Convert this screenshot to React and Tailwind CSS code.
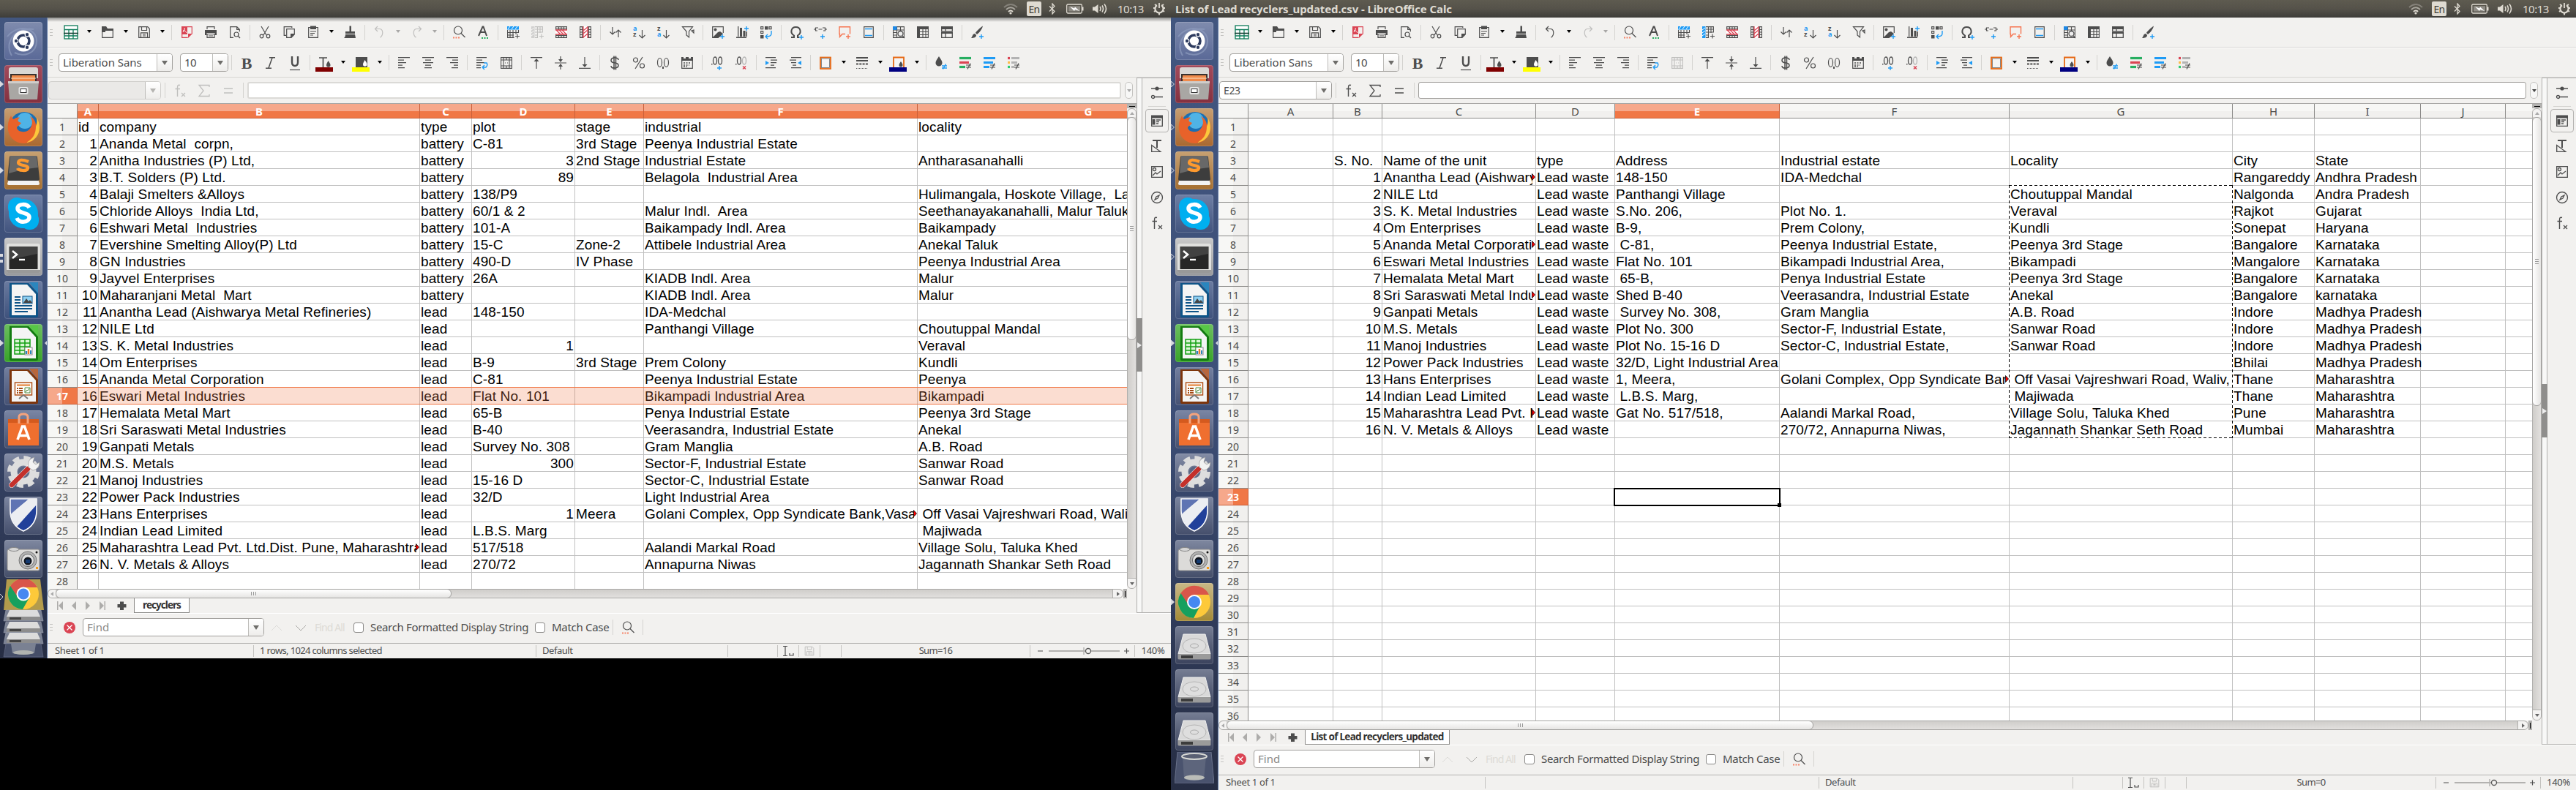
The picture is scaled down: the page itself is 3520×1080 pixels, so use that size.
import React from "react";

const UI = "font-['Noto_Sans',sans-serif]";
const INK = "#4d4d4d";

/* ---------- toolbar glyphs, all on a 20x20 canvas ---------- */
const S = (p) => <g fill="none" stroke={p.c || INK} strokeWidth={p.w || 1.2}>{p.children}</g>;
const F = (p) => <g fill={p.c || INK}>{p.children}</g>;
const Plus = ({ x = 16, y = 16 }) => <path d={`M${x - 3} ${y}h6M${x} ${y - 3}v6`} stroke="#1e9bf5" strokeWidth="1.4" />;

const ICONS = {
  calc: <><rect x="1" y="1" width="18" height="18" fill="#fff" stroke="#0b7a57" strokeWidth="1.3" /><path d="M1 6.5h18M1 15h18M7 6.5V19M13 6.5V19" stroke="#0b7a57" strokeWidth="1.3" /><path d="M0 11.5h20" stroke="#163f33" strokeWidth="1.6" /></>,
  open: <><S><path d="M2.700 7.500h14.600v9.800H2.700z" /></S><F><path d="M2 2h6l2 3h8v3H7v2H2z" /></F></>,
  save: <S><path d="M2.700 2.700h12l2.600 2.600v12H2.700zM6.500 2.700v4.800h7V2.700M5.500 17.300v-6.500h9v6.500M8 13h4M8 15h4" strokeWidth="1.2" /></S>,
  pdf: <><F c="#da4453"><path d="M3 2h8v11H3z" /></F><path d="M5 10c1-2 3-4 2-6M5 8c2-1 4 1 5 3" fill="none" stroke="#fff" /><S c="#da4453"><path d="M11 2.700h6.300v9.600M3.700 13v4.300h8" /></S><F c="#da4453"><path d="M12 12h6l-6 6z" /></F></>,
  print: <><F><path d="M2 7h16v7h-2.500V11H4.500v3H2z" /></F><S><path d="M5 6V2.700h10V6M5 12.500h10v4.800H5zM7 15h6" /></S></>,
  preview: <S><path d="M8 17.300H3.700V2.700h9l3.600 3.600v3M12.700 2.700v3.600h3.600" /><circle cx="12" cy="13" r="3" /><path d="M14 15l3 3" /></S>,
  cut: <S><path d="M5 2l7 12M15 2L8 14" /><circle cx="5.500" cy="15.500" r="2.300" /><circle cx="14.500" cy="15.500" r="2.300" /></S>,
  copy: <><S><path d="M6 14.300H3.200V2.700h10.600V4M6.700 5.700h10.600V13L13 17.300H6.700z" /></S><F><path d="M12 12h6l-6 6z" /></F></>,
  paste: <><F><path d="M6 1.500h8V6H6z" /></F><S><path d="M6 3.500H3.700v13.800h12.600V3.500H14M6 9h8M6 11.500h6M6 14h4" /></S></>,
  brush: <F><path d="M9.500 1.500h2.500V9h5v3H4V9h5.500zM4 13h13l1 5H2c1.500-1 2-3 2-5z" /></F>,
  undo: <S><path d="M7 2L3.500 5.500 7 9M3.500 5.500h6c5 0 6 8 1 11.800" /></S>,
  redo: <S><path d="M13 2l3.500 3.500L13 9M16.500 5.500h-6c-5 0-6 8-1 11.800" /></S>,
  find: <><S><circle cx="9" cy="7.500" r="5.500" /><path d="M13 11.500l5.500 5.500" /></S><path d="M2 17.500h10" stroke="#f6866a" strokeWidth="2" strokeDasharray="2 1.500" /></>,
  spell: <><S w="2"><path d="M4 15L9.500 2.500h1L15 15M6 10h7.500" /></S><path d="M8 18h9" stroke="#27ae60" strokeWidth="2" strokeDasharray="2 1.500" /></>,
  rowins: <><rect x="2" y="2" width="16" height="4.500" fill="#1e9bf5" /><path d="M3 6l3-4M8 6l3-4M13 6l3-4" stroke="#fff" /><S w="1.100"><path d="M2.600 7v10.400h9M2 10.500h16M2 14h9M6 7v10M10 7v10M14 7v6M17.500 7v4" /><path d="M13 15.500h6M16 12.500v6" /></S></>,
  colins: <><rect x="2" y="2" width="4.500" height="16" fill="#1e9bf5" /><path d="M2 7l4-3M2 11l4-3M2 15l4-3" stroke="#fff" /><S w="1.100"><path d="M7 2.600h10.400v8M7 6h10M7 10h10M7 14h4M7 17.400h4M10.500 2v16M14 2v9" /><path d="M13 15.500h6M16 12.500v6" /></S></>,
  rowdel: <><S w="1.100"><path d="M2.600 2.600h14.800v14.800H2.600zM2 5.500h16M2 14.500h16M6.500 2v16M10 2v16M13.500 2v16" /></S><rect x="2" y="7" width="16" height="6" fill="#fff" /><path d="M2 7h16M2 13h16M3 7l6 6M7 7l6 6M11 7l6 6" stroke="#da4453" strokeWidth="1.300" /></>,
  coldel: <><S w="1.100"><path d="M2.600 2.600h14.800v14.800H2.600zM5.500 2v16M14.500 2v16M2 6.500h16M2 10h16M2 13.500h16" /></S><rect x="7" y="2" width="6" height="16" fill="#fff" /><path d="M7 2v16M13 2v16M7 8l6-5M7 12l6-5M7 17l6-5" stroke="#da4453" strokeWidth="1.300" /></>,
  sort: <S><path d="M6 3v10M2.500 9.500L6 13l3.500-3.500M14 17V7M10.500 10.500L14 7l3.500 3.500" /></S>,
  az: <><text x="1" y="8" fontSize="9" fontWeight="700" fill="#1e9bf5">a</text><text x="1" y="16" fontSize="9" fontWeight="700" fill={INK}>z</text><S><path d="M13.500 7v11M9.500 14l4 4 4-4" /></S></>,
  za: <><text x="1" y="8" fontSize="9" fontWeight="700" fill={INK}>z</text><text x="1" y="16" fontSize="9" fontWeight="700" fill="#1e9bf5">a</text><S><path d="M13.500 7v11M9.500 14l4 4 4-4" /></S></>,
  filter: <><S><path d="M2.500 2.700h14L11.500 9v8L8 14V9z" /><path d="M15 8l3 3v-4z" /></S></>,
  image: <><S><path d="M11 17.300H2.700V2.700h14.600V11" /></S><F><circle cx="6.500" cy="6.500" r="2" /><path d="M3 17l7-7 3-1 4 3-5 5z" /></F><Plus /></>,
  chart: <><F><path d="M4 2h1.300v14H4zM7 4h3v12H7zM11.500 8h3v8h-3zM15.500 9H17v7h-1.500zM2 16.500h14V18H2z" /></F><Plus x={16} y={5} /></>,
  pivot: <><S><path d="M2.700 2.700h3v3h-3zM2.700 8.700h3v3h-3z" /><path d="M14 2.700h3v3h-3z" /></S><F><path d="M8 2h4.500v4.500H8zM2 14h4.500v4.500H2z" /></F><path d="M17 8v4q0 4-7 4M12 13l-3 3 3 3" fill="none" stroke="#1e9bf5" strokeWidth="1.400" /></>,
  omega: <><S w="2"><path d="M3 17h4v-2.500C1 11 3 3 9.500 3S18 11 12 14.500V17h2" /></S><Plus x={17} y={17} /></>,
  link: <><S><path d="M6 8H3.500V4H7M13 4h3.500v4H14M1 6h3M7.500 6h5M16 6h3" /></S><Plus x={13} /></>,
  comment: <><path d="M11 12.500H7l-3.500 4v-4H3V2.700h14.500v9.800" fill="none" stroke="#f67450" strokeWidth="1.400" /><path d="M12 16h6M15 13v6" stroke="#f67450" strokeWidth="1.400" /></>,
  headfoot: <><S><path d="M3.700 2.700h12.600v14.600H3.700z" /></S><path d="M5 5.500h10M5 14.500h10" stroke="#1e9bf5" strokeWidth="1.400" /></>,
  freeze: <><S w="1.100"><path d="M2.600 2.600h14.800v14.800H2.600zM7.500 2v16M12.500 2v9M2 7h16M2 10.500h6M2 14h6" /></S><rect x="2" y="2" width="5.500" height="5" fill="#1e88e5" /><circle cx="12.500" cy="12" r="3.500" fill="#eee" stroke={INK} strokeWidth="1.300" /><path d="M15 15l3 3" stroke={INK} strokeWidth="1.400" /></>,
  split: <><F><path d="M2 2h16v4H2zM2 6h4v12H2z" /></F><S w="1.100"><path d="M6 17.400h11.400V6M10 6v12M14 6v12M6 9.500h12M6 13.500h12" /></S></>,
  splitwin: <><F><path d="M2 2h16v4H2zM2 10h16v2H2z" /></F><S w="1.300"><path d="M2.700 6v3h14.600V6M8 6v3M2.700 12v5.300h14.600V12M8 12v5" /></S></>,
  paint: <><F><path d="M18 1.500C14 4 9 9 8 11l2 2c3-2 7-7 8-11.500zM7 12c-3 0-3 4-5 6 4 0 7-1 7-4z" /></F><Plus /></>,
  bold: <text x="10" y="18" fontSize="22" fontWeight="700" textAnchor="middle" fill={INK} className="font-['Liberation_Serif',serif]">B</text>,
  italic: <S w="1.500"><path d="M8 2.700h8M3 17.300h8M12 3L7 17" /></S>,
  under: <><S w="2.400"><path d="M6 1v8q0 5 4 5t4-5V1" /></S><path d="M3 19.500h14" stroke={INK} strokeWidth="1.200" /></>,
  fontcol: <><S w="1.700"><path d="M2 3h11M7.500 3v13" /></S><F><path d="M14.500 7c2 3 3 4 3 6a2.600 2.600 0 0 1-5.500 0c0-2 1-3 2.500-6z" /></F></>,
  bgcol: <><F><path d="M2 2h16v15H2z" /></F><path d="M14.500 6c2 3 3 4 3 6a2.600 2.600 0 0 1-5.500 0c0-2 1-3 2.500-6z" fill="#fff" /></>,
  left: <S><path d="M2 2.700h16M2 6.200h8M2 9.700h11M2 13.200h6M2 16.700h9" /></S>,
  center: <S><path d="M2 2.700h16M6 6.200h8M3 9.700h14M6 13.200h8M5 16.700h10" /></S>,
  right: <S><path d="M2 2.700h16M10 6.200h8M7 9.700h11M12 13.200h6M9 16.700h9" /></S>,
  wrap: <><S><path d="M2 2.700h14M2 6.200h8M2 9.700h11M2 13.200h6M2 16.700h6" /></S><path d="M12 10h4q2 3-1 6h-4M13 13l-3 3 3 3" fill="none" stroke="#1e9bf5" strokeWidth="1.400" /></>,
  merge: <S w="1.100"><path d="M2.600 2.600h14.800v14.800H2.600zM2 6h16M2 14h16M6 2v4M10 2v4M14 2v4M6 14v4M10 14v4M14 14v4M6 6v8M14 6v8M8 10h1M11 10h1" /></S>,
  top: <><S><path d="M2 2.700h16M10 5v13" /></S><F><path d="M10 4l3.500 4h-7z" /></F></>,
  middle: <><S><path d="M2 10h16M10 1v7M10 12v7" /></S><F><path d="M10 9L7 5h6zM10 11l3 4H7z" /></F></>,
  bottom: <><S><path d="M2 17.300h16M10 2v13" /></S><F><path d="M10 16L6.500 12h7z" /></F></>,
  dollar: <S w="1.800"><path d="M15 6q0-3-5-3T5 6.500q0 3 5 3.500t5 3.500T10 17t-5-3M9 .500v19M11.500 .500v19" strokeWidth="1.500" /></S>,
  percent: <S><circle cx="5.500" cy="6" r="3" /><circle cx="14.500" cy="14" r="3" /><path d="M15 2L5 18" /></S>,
  number: <><S><ellipse cx="5.500" cy="9.500" rx="3" ry="6" /><ellipse cx="14.500" cy="9.500" rx="3" ry="6" /></S><F><path d="M9 15h2v3H9z" /></F></>,
  date: <><F><path d="M2 2h3v2h3V2h4v2h3V2h3v5H2z" /></F><S><path d="M2.700 6v11.300h14.600V6" /><path d="M5 10h10M5 13h8M5 15h5" strokeWidth="1.500" strokeDasharray="2 1.500" /></S></>,
  decadd: <><S w="1.300"><ellipse cx="7" cy="7" rx="2.500" ry="5" /><ellipse cx="14" cy="7" rx="2.500" ry="5" /></S><F><path d="M2 11h1.500v1.500H2z" /></F><Plus x={13} y={17} /></>,
  decdel: <><S w="1.300"><ellipse cx="7" cy="7" rx="2.500" ry="5" /></S><S c="#b5b5b5" w="1.300"><ellipse cx="14" cy="7" rx="2.500" ry="5" /></S><F><path d="M2 11h1.500v1.500H2z" /></F><path d="M12 14.500l4 4M16 14.500l-4 4" stroke="#da4453" strokeWidth="1.500" /></>,
  indent: <><S><path d="M2 2.700h14M9 6.200h9M9 9.700h8M9 13.200h5M2 16.700h14" /></S><path d="M2 7v6l5-3z" fill="#1e9bf5" /></>,
  outdent: <><S><path d="M4 2.700h14M2 6.200h9M4 9.700h7M6 13.200h5M4 16.700h14" /></S><path d="M18 7v6l-5-3z" fill="#1e9bf5" /></>,
  border: <><rect x="3" y="2.500" width="14" height="15.500" fill="#f5f5f5" stroke="#e66914" strokeWidth="1.800" /><rect x="4.500" y="4" width="11" height="12.500" fill="none" stroke="#6a6a6a" strokeWidth=".8" /></>,
  linestyle: <S w="1.800"><path d="M2 3h16M2 7h16" /><path d="M2 11.500h16" strokeDasharray="3 1.300" /><path d="M2 17.500h16" strokeDasharray="1 1" strokeWidth="1.200" /></S>,
  bordercol: <><path d="M3 18V2.500h14V18" fill="#f5f5f5" stroke="#e66914" strokeWidth="1.800" /><path d="M13 8c2 3 2.500 3.500 2.500 5a2.300 2.300 0 0 1-5 0c0-1.500 1-3 2.500-5z" fill={INK} /></>,
  cond: <><F><path d="M7 1c3 5 4.500 6 4.500 9a4.300 4.300 0 0 1-9 0c0-3 2-5 4.500-9z" /></F><path d="M11 14h7M11 17h7M16.500 11.500l-4 7" stroke="#1e9bf5" strokeWidth="1.400" /></>,
  cond2: <><path d="M2 3.500h16" stroke="#27ae60" strokeWidth="3.200" /><path d="M2 9.500h13" stroke="#da4453" strokeWidth="3.200" /><path d="M2 15.500h8" stroke="#27ae60" strokeWidth="3.200" /><S w="1.200"><path d="M11 13h7M11 16h7M17 10.500l-4 8" /></S></>,
  cond3: <><path d="M2 3.500h16M2 9.500h13M2 15.500h8" stroke="#1e9bf5" strokeWidth="3.200" /><S w="1.200"><path d="M11 13h7M11 16h7M17 10.500l-4 8" /></S></>,
  cond4: <><path d="M2 3.500h3" stroke="#da4453" strokeWidth="3.200" /><path d="M2 9.500h3" stroke="#fdbc4b" strokeWidth="3.200" /><path d="M2 15.500h3" stroke="#2ecc71" strokeWidth="3.200" /><path d="M7 3.500h11M7 9.500h8M7 15.500h4" stroke="#b3b3b3" strokeWidth="3.200" /><S w="1.200"><path d="M11 13h7M11 16h7M17 10.500l-4 8" /></S></>,
  fx: <><S w="1.400"><path d="M10 2.500C7 1.500 6.500 3 6.500 6v12M3.500 7.500H10" /><path d="M12 13l5 5M17 13l-5 5" strokeWidth="1.200" /></S></>,
  sigma: <S w="1.300"><path d="M17 5V2.500H3L9 10l-6 7.500h14V15" /></S>,
  equal: <S w="1.300"><path d="M4 7h12M4 13h12" /></S>,
  props: <S w="1.300"><path d="M2.700 3v14.300h14.600V3" /><path d="M2 4.500h16" strokeWidth="4" /><path d="M5.500 8v7.500" strokeWidth="4" /><path d="M9 9h6M9 11.500h4M9 14h3" /></S>,
  sliders: <><S w="1.300"><path d="M2 4h16M7 15.500h11" /><circle cx="4.500" cy="15.500" r="2" /></S><F><circle cx="10" cy="4" r="2.600" /></F></>,
  styles: <><S w="2"><path d="M4 2h12M10 2v10" /></S><S w="1.300"><path d="M2.700 8.500v8.800h12z" /></S></>,
  gallery: <S w="1.300"><path d="M2.700 2.700h14.600v14.600H2.700z" /><circle cx="6.500" cy="6.500" r="2" /><path d="M4 15l4-4 2 2 5-4" /></S>,
  compass: <><S w="1.300"><circle cx="10" cy="10" r="7.500" /><path d="M13 7l-2 4-4 2 2-4z" /></S></>,
};

const Icon = ({ name, off, size }) => (
  <svg viewBox="0 0 20 20" className={`${size || "size-5"} shrink-0 overflow-visible ${off ? "opacity-30 grayscale" : ""}`}>{ICONS[name]}</svg>
);

const Sep = ({ h = "h-[21px]" }) => (
  <div className="flex w-2 shrink-0 justify-center"><div className={`${h} w-px bg-[#d4d3d0]`} /></div>
);
const Caret = ({ off }) => (
  <div className="flex w-[17px] shrink-0 justify-center pb-0.5">
    <svg viewBox="0 0 6 4" className={`h-1 w-1.5 ${off ? "opacity-30" : ""}`}><path d="M0 0h6L3 4z" /></svg>
  </div>
);
const Grip = () => (
  <div className="flex w-3.5 shrink-0 flex-col items-center gap-[3px] pr-1">
    {[0, 1, 2].map((i) => <div key={i} className="h-px w-1 bg-[#c4c3c0]" />)}
  </div>
);

const SWATCH = { fontcol: "bg-[#800000]", bgcol: "bg-[#ffff00]", bordercol: "bg-[#000080]" };

function Items({ list }) {
  return list.split(" ").map((raw, i) => {
    if (raw === "|") return <Sep key={i} />;
    if (raw === "v" || raw === "v-") return <Caret key={i} off={raw === "v-"} />;
    const off = raw.endsWith("-");
    const name = off ? raw.slice(0, -1) : raw;
    return (
      <div key={i} className="relative flex w-[33px] shrink-0 justify-center">
        <Icon name={name} off={off} />
        {SWATCH[name] && <div className={`absolute left-1 top-4 h-1.5 w-6 ${SWATCH[name]}`} />}
      </div>
    );
  });
}

const Drop = ({ w, off }) => (
  <div className={`flex ${w} shrink-0 items-center justify-center self-stretch rounded-r-[3px] border-l border-[#bdbcb9] bg-linear-to-b from-white to-[#eeedeb]`}>
    <svg viewBox="0 0 8 6" className="h-1.5 w-2"><path d="M0 0h8L4 6z" fill={off ? "#b5b4b1" : "#6e6d6a"} /></svg>
  </div>
);

/* ---------- top panel ---------- */
function Panel({ title }) {
  return (
    <div className={`flex h-6 items-center bg-linear-to-b from-[#5e5b50] via-[#55524a] to-[#3e3d39] text-[#dfdbd2] ${UI}`}>
      <div className="flex-1 whitespace-pre pl-[6px] text-[15px] leading-6 font-bold tracking-[-0.1px]">{title}</div>
      <svg viewBox="0 0 20 16" className="mr-3 h-4 w-5" fill="none" strokeWidth="2">
        <path d="M1 6q9-8 18 0" stroke="#85827a" /><path d="M4 9q6-5.500 12 0" stroke="#a9a69e" /><path d="M7 12q3-3 6 0" stroke="#dfdbd2" /><circle cx="10" cy="14" r="1.600" fill="#dfdbd2" />
      </svg>
      <div className="mr-2.5 flex h-5 w-5 items-center justify-center rounded-[2px] bg-[#dfdbd2] text-[14px] tracking-[-0.8px] text-[#3e3d39]">En</div>
      <svg viewBox="0 0 10 16" className="mr-3.5 h-4 w-2.5" fill="none" stroke="#dfdbd2" strokeWidth="1.300"><path d="M1 4.500l7 7L5 15V1l3 3.500-7 7" /></svg>
      <svg viewBox="0 0 24 14" className="mr-3 h-3.5 w-6" fill="none" stroke="#dfdbd2" strokeWidth="1.300"><rect x=".7" y="1" width="20.600" height="12" rx="1.500" /><path d="M22.500 4.500v5" strokeWidth="2" /><rect x="3" y="3.300" width="16" height="7.400" fill="#8f8c85" stroke="none" /><path d="M5 4l6 2.500 1-2 6 5.500-6-2-1 2z" fill="#fff" stroke="none" /></svg>
      <svg viewBox="0 0 20 16" className="mr-3.5 h-4 w-5" fill="none" stroke="#dfdbd2" strokeWidth="1.600"><path d="M0 5.500h3L7.500 2v12L3 10.500H0z" fill="#dfdbd2" stroke="none" /><path d="M10 5q2 3 0 6M13 3.500q3 4.500 0 9M16 1.500q5 6.500 0 13" /></svg>
      <div className="mr-3 w-9 text-[15px] leading-6 tracking-[-0.5px]">10:13</div>
      <svg viewBox="0 0 18 18" className="mr-[7px] h-[18px] w-[18px]" fill="none" stroke="#dfdbd2"><path d="M6 4.200a5.600 5.600 0 1 0 6 0" strokeWidth="2.200" /><path d="M9 1v7" strokeWidth="1.800" /><path d="M9 15v2.500M2 13l2-1.500M16 13l-2-1.500M1 8h2.500M17 8h-2.500M3 3l2 1.500M15 3l-2 1.500" strokeWidth="2" /></svg>
    </div>
  );
}

/* ---------- launcher ---------- */
const ART = {
  dash: <><path d="M4 20C18 2 44 8 44 26S26 48 14 42M10 46C-2 26 18 6 40 10" fill="none" stroke="#8d9bbd" strokeWidth="2" opacity=".7" /><circle cx="26" cy="26" r="14.500" fill="#fff" /><circle cx="26" cy="26" r="8" fill="none" stroke="#2c3a5e" strokeWidth="3.600" /><g fill="#2c3a5e" stroke="#fff" strokeWidth="1.200"><circle cx="16" cy="26" r="2.800" /><circle cx="31" cy="17.300" r="2.800" /><circle cx="31" cy="34.700" r="2.800" /></g></>,
  files: <><path d="M6 6q0-3 3-3h34q3 0 3 3v12H6z" fill="#d9d7d4" /><path d="M8 12h36v12H8z" fill="#39312e" /><path d="M10 14h32v10H10z" fill="#f08a4b" /><path d="M9 18h34" stroke="#fbe3c8" /><path d="M5 22h42l-2 25H7z" fill="#a9a7a4" /><path d="M5 22h42v3H5z" fill="#cfcdca" /><rect x="19.500" y="30" width="13" height="10" rx="2" fill="#e6e6e6" /><rect x="22" y="32.500" width="8" height="5" fill="#fff" stroke="#333" /></>,
  firefox: <><circle cx="27" cy="25" r="20" fill="#1b6fb3" /><circle cx="28" cy="17" r="11" fill="#4fb3e6" /><path d="M44 12c9 16 2 35-17 36C12 48 3 36 5 22c1-7 3-9 4-12 1 3 2 4 4 5 2-2 6-3 8-2-4 3-3 6 2 7-2 4-6 4-6 7 2 6 12 7 17 2 5-6 5-12 1-18 5 2 8 8 8 12 2-4 2-7 1-11z" fill="#e8622a" /><path d="M44 12c9 16 2 33-14 35 9-5 13-12 13-22 2-4 2-9 1-13z" fill="#fbc73c" /></>,
  sublime: <><path d="M6 38h40l2 6q0 2-2 2H6q-2 0-2-2z" fill="#f2f2f2" /><path d="M9 6h34q2 0 2 2l3 30q0 2-2 2H6q-2 0-2-2L7 8q0-2 2-2z" fill="#3d3d3d" /><path d="M8 6h36l2 16q-20 2-40 8z" fill="#7b7b7b" opacity=".7" /><path d="M33 14q-13-5-14 1c0 5 14 3 13 8-1 5-13 3-14 0" fill="none" stroke="#ff9a2e" strokeWidth="4.200" /></>,
  skype: <><rect x="5" y="4" width="24" height="26" rx="12" fill="#00aff0" /><rect x="22" y="22" width="25" height="26" rx="12" fill="#00aff0" /><circle cx="26" cy="26" r="20" fill="#00aff0" /><path d="M34 18c-3-6-16-6-16 1s16 5 16 12-14 9-17 1" fill="none" stroke="#fff" strokeWidth="5.500" /></>,
  term: <><rect x="3" y="8" width="46" height="40" rx="3" fill="#e0e0de" /><path d="M3 44h46v2q0 2-2 2H5q-2 0-2-2z" fill="#999" /><rect x="6.500" y="12" width="39" height="31" fill="#262626" /><path d="M7 12h38v10L7 30z" fill="#555" opacity=".6" /><path d="M11 18l6 5-6 5" fill="none" stroke="#fff" strokeWidth="2.600" /><path d="M20 30h8" stroke="#fff" strokeWidth="2.400" /></>,
  writer: <><path d="M7 3h26l13 14v31q0 2-2 2H9q-2 0-2-2z" fill="#0e5488" /><path d="M34 2h12v15z" fill="#2a86be" /><path d="M10 5h21l12 13v29H10z" fill="#f4f4f4" /><path d="M14 22h8M14 26h8M14 30h8M14 34h24M14 38h24M14 42h18" stroke="#0e5488" strokeWidth="2" /><rect x="25" y="21" width="13" height="10" fill="#8fd0f2" stroke="#0e5488" /><path d="M26 30l4-6 3 4 2-2 3 4z" fill="#444" /></>,
  calc: <><path d="M7 3h26l13 14v31q0 2-2 2H9q-2 0-2-2z" fill="#127b10" /><path d="M34 2h12v15z" fill="#56c845" /><path d="M10 5h21l12 13v29H10z" fill="#f4f4f4" /><path d="M14 21h21v20H14zM14 26h21M14 31h21M14 36h21M21 21v20M28 21v20" fill="#d9f5d4" stroke="#12a012" strokeWidth="1.500" /><rect x="28" y="32" width="10" height="10" fill="#fff" stroke="#888" /><path d="M30 41v-4" stroke="#2a86be" strokeWidth="2.500" /><path d="M33 41v-7" stroke="#f0792a" strokeWidth="2.500" /><path d="M36 41v-5" stroke="#2a86be" strokeWidth="2" /></>,
  impress: <><path d="M7 3h26l13 14v31q0 2-2 2H9q-2 0-2-2z" fill="#7d350c" /><path d="M34 2h12v15z" fill="#b8663c" /><path d="M10 5h21l12 13v29H10z" fill="#f4f4f4" /><rect x="14.500" y="21" width="23" height="17" fill="#fff" stroke="#b3541c" strokeWidth="1.500" /><path d="M17 24.500h18" stroke="#e07a2c" strokeWidth="2" /><path d="M17 29h8M17 32h8M17 35h8" stroke="#a34a14" strokeWidth="2" strokeDasharray="2 1 9" /><path d="M28 35V28h7v7zM29 34l2-3 1 1 2-3" fill="none" stroke="#4f8b3c" /><path d="M26 38l-6 5M26 38l6 5" stroke="#777" strokeWidth="1.800" /></>,
  bag: <><path d="M5 12h42v36H5z" fill="#ef6f2f" /><path d="M5 12h42v5H5z" fill="#d45a1e" /><path d="M20 18V9q0-4 6-4t6 4v9" fill="none" stroke="#f4a37c" strokeWidth="3" /><path d="M18 40l6.500-18h3L34 40M18.500 34.500h15" fill="none" stroke="#fff" strokeWidth="3.600" /></>,
  gear: <><circle cx="26" cy="25" r="18.500" fill="none" stroke="#dcdcdc" strokeWidth="7" strokeDasharray="8.500 6" /><circle cx="26" cy="25" r="13" fill="none" stroke="#dedede" strokeWidth="9" /><circle cx="26" cy="25" r="7" fill="#5b6480" /><path d="M35 18L10 43" stroke="#fff" strokeWidth="8" strokeLinecap="round" opacity=".7" /><path d="M32 21L10 43" stroke="#c4302b" strokeWidth="6.500" strokeLinecap="round" /><path d="M33 19q-3-11 8-14l-2 7 4 3 5-3q0 9-9 11z" fill="#f2f2f2" stroke="#999" strokeWidth=".7" /></>,
  shield: <><path d="M8 3h36v16q0 20-18 28Q8 39 8 19z" fill="#21409a" stroke="#fff" strokeWidth="1.600" /><path d="M33 3h11v8L17 41Q9 32 8 24z" fill="#eceef2" /><path d="M9 4h22L9 24z" fill="#8191c0" opacity=".65" /></>,
  camera: <><rect x="4" y="13" width="44" height="29" rx="2" fill="#dcdbd9" stroke="#8c8c8c" /><ellipse cx="13" cy="13" rx="7" ry="2.500" fill="#d5d5d5" stroke="#888" /><circle cx="32" cy="28" r="12" fill="#b3b3b3" stroke="#777" /><circle cx="32" cy="28" r="8.500" fill="#e2e2e2" stroke="#666" /><circle cx="32" cy="29" r="5.500" fill="#11161f" /><rect x="29" y="27" width="6" height="5" fill="#143a70" /><circle cx="44" cy="17" r="1.500" fill="#111" /><rect x="43" y="37" width="3" height="3" fill="#f39a1c" /></>,
  chrome: <><circle cx="26" cy="26" r="22" fill="#fdc93a" /><path d="M6 17A22 22 0 0 1 46 16H26l-8 14z" fill="#d9564a" /><path d="M7.500 14A22 22 0 0 0 25 48l9-17-16-1z" fill="#17a05e" /><circle cx="26" cy="26" r="10" fill="#fff" /><circle cx="26" cy="26" r="8" fill="#4688f1" /></>,
  drive: <><path d="M11 11h30l7 27H4z" fill="#d9d9d9" stroke="#f0f0f0" /><path d="M3.500 38h45v6q0 1.500-2 1.500h-41q-2 0-2-1.500z" fill="#9b9b9b" /><path d="M8 40h16v4H8z" fill="#3c3c3c" /><ellipse cx="26" cy="27" rx="16" ry="10" fill="#dedede" stroke="#b5b5b5" /><ellipse cx="26" cy="27" rx="5.500" ry="3" fill="none" stroke="#aaa" /></>,
};

const TILES = {
  dash: "from-[#7f8bad] to-[#5a6997]", files: "from-[#a34a5c] to-[#84303f]", firefox: "from-[#c79f72] to-[#a9682f]",
  sublime: "from-[#c7a172] to-[#a56f30]", skype: "from-[#6f7fa4] to-[#42547e]", term: "from-[#c9c9c9] to-[#999a9d]",
  writer: "from-[#6b7ba0] to-[#3e517c]", calc: "from-[#6bbf5e] to-[#37a327]", impress: "from-[#737f9f] to-[#465274]",
  bag: "from-[#7a86a4] to-[#46506e]", gear: "from-[#838ca5] to-[#4b5573]", shield: "from-[#7b859f] to-[#454f6c]",
  camera: "from-[#7f88a0] to-[#444e69]", chrome: "from-[#c9b886] to-[#a48a34]", drive: "from-[#757d93] to-[#3b435d]",
};

const Pip = ({ hollow, two }) => two ? (
  <div className="absolute -left-1.5 top-[22px] flex flex-col gap-1"><div className="h-1 w-1 bg-[#d8dae0]" /><div className="h-1 w-1 bg-[#d8dae0]" /></div>
) : (
  <svg viewBox="0 0 5 8" className="absolute -left-1.5 top-[22px] h-2 w-[5px] overflow-visible"><path d="M0 0l4.500 4L0 8z" fill={hollow ? "none" : "#d8dae0"} stroke="#d8dae0" /></svg>
);

function Tile({ name, pip, focus }) {
  return (
    <div className={`relative size-[52px] shrink-0 rounded-[4px] bg-linear-to-b shadow-[inset_0_0_0_1px_rgba(255,255,255,0.16)] ${TILES[name]}`}>
      <svg viewBox="0 0 52 52" className="size-[52px]">{ART[name]}</svg>
      {pip && <Pip hollow={pip === "o"} two={pip === "2"} />}
      {focus && <svg viewBox="0 0 4 8" className="absolute -right-[7px] top-[22px] h-2 w-1"><path d="M4 0L0 4l4 4z" fill="#d8dae0" /></svg>}
    </div>
  );
}

const Trash = () => (
  <svg viewBox="0 0 54 43" className="h-[43px] w-[54px] shrink-0">
    <path d="M4 0h46l4 43H0z" fill="#4a536e" stroke="#69718a" />
    <path d="M11 7h32l-3 30q-14 5-27 0z" fill="#626a80" opacity=".8" />
    <ellipse cx="27" cy="6" rx="17" ry="4" fill="#5a6074" stroke="#d6d7d4" strokeWidth="2" />
    <ellipse cx="27" cy="35" rx="14" ry="3.500" fill="#babcb8" />
  </svg>
);

function Launcher({ folded }) {
  const p = folded ? "f" : "o";
  return (
    <div className="flex w-[65px] shrink-0 flex-col items-center gap-[7px] overflow-hidden border-r border-[#5d79a8] bg-linear-to-b from-[#42567f] via-[#3d4f78] to-[#262d43] pt-1.5">
      <Tile name="dash" />
      <Tile name="files" pip={p} />
      <Tile name="firefox" pip={p} />
      <Tile name="sublime" pip={p} />
      <Tile name="skype" />
      <Tile name="term" pip={folded ? "2" : "o"} />
      <Tile name="writer" />
      <Tile name="calc" pip="f" focus />
      <Tile name="impress" />
      <Tile name="bag" />
      <Tile name="gear" />
      <Tile name="shield" />
      <Tile name="camera" />
      {folded ? (
        <svg viewBox="0 0 65 108" className="-mt-[5px] h-[108px] w-[65px] shrink-0">
          <path d="M9 0h46l5 42H5z" fill="#b39b4c" />
          <circle cx="32" cy="20" r="21" fill="#fdc93a" /><path d="M13 11A21 21 0 0 1 51 11H32l-8 13z" fill="#d9564a" /><path d="M14 9A21 21 0 0 0 31 41l9-16-16-1z" fill="#17a05e" /><circle cx="32" cy="20" r="9.500" fill="#fff" /><circle cx="32" cy="20" r="7.500" fill="#4688f1" />
          <path d="M0 20l4 4-4 4" fill="none" stroke="#d8dae0" />
          {[42, 58, 73].map((y) => (
            <g key={y}><path d={`M5 ${y + 15}l3-15h48l3 15z`} fill="#7b8294" stroke="#9aa0ad" strokeWidth=".6" /><path d={`M13 ${y}h38l4 9H9z`} fill="#dcdcdc" /><path d={`M9 ${y + 9}h46v5H9z`} fill="#8d8d8d" /><path d={`M13 ${y + 10}h16v3H13z`} fill="#444" /></g>
          ))}
          <path d="M5 106l3-18h48l3 18z" fill="#454e68" stroke="#69718a" strokeWidth=".6" /><path d="M15 88h34l-2 13q-15 4-30 0z" fill="#7a8192" /><ellipse cx="32" cy="100" rx="14" ry="3" fill="#b0b3b0" />
        </svg>
      ) : (
        <>
          <Tile name="chrome" pip="f" />
          <Tile name="drive" />
          <Tile name="drive" />
          <Tile name="drive" />
          <div className="-mt-[5px]"><Trash /></div>
        </>
      )}
    </div>
  );
}

/* ---------- sheet ---------- */
const LEFT = {
  grid: "grid-cols-[29px_439px_71px_141px_94px_374px_467px]",
  cols: "ABCDEFG".split(""),
  count: 28,
  rows: [
    "id|company|type|plot|stage|industrial|locality",
    "1|Ananda Metal  corpn,|battery|C-81|3rd Stage|Peenya Industrial Estate|",
    "2|Anitha Industries (P) Ltd,|battery|3|2nd Stage|Industrial Estate|Antharasanahalli",
    "3|B.T. Solders (P) Ltd.|battery|89||Belagola  Industrial Area|",
    "4|Balaji Smelters &Alloys|battery|138/P9|||Hulimangala, Hoskote Village,  Laxmi",
    "5|Chloride Alloys  India Ltd,|battery|60/1 & 2||Malur Indl.  Area|Seethanayakanahalli, Malur Taluk",
    "6|Eshwari Metal  Industries|battery|101-A||Baikampady Indl. Area|Baikampady",
    "7|Evershine Smelting Alloy(P) Ltd|battery|15-C|Zone-2|Attibele Industrial Area|Anekal Taluk",
    "8|GN Industries|battery|490-D|IV Phase||Peenya Industrial Area",
    "9|Jayvel Enterprises|battery|26A||KIADB Indl. Area|Malur",
    "10|Maharanjani Metal  Mart|battery|||KIADB Indl. Area|Malur",
    "11|Anantha Lead (Aishwarya Metal Refineries)|lead|148-150||IDA-Medchal|",
    "12|NILE Ltd|lead|||Panthangi Village|Choutuppal Mandal",
    "13|S. K. Metal Industries|lead|1|||Veraval",
    "14|Om Enterprises|lead|B-9|3rd Stage|Prem Colony|Kundli",
    "15|Ananda Metal Corporation|lead|C-81||Peenya Industrial Estate|Peenya",
    "16|Eswari Metal Industries|lead|Flat No. 101||Bikampadi Industrial Area|Bikampadi",
    "17|Hemalata Metal Mart|lead|65-B||Penya Industrial Estate|Peenya 3rd Stage",
    "18|Sri Saraswati Metal Industries|lead|B-40||Veerasandra, Industrial Estate|Anekal",
    "19|Ganpati Metals|lead|Survey No. 308||Gram Manglia|A.B. Road",
    "20|M.S. Metals|lead|300||Sector-F, Industrial Estate|Sanwar Road",
    "21|Manoj Industries|lead|15-16 D||Sector-C, Industrial Estate|Sanwar Road",
    "22|Power Pack Industries|lead|32/D||Light Industrial Area|",
    "23|Hans Enterprises|lead|1|Meera|>Golani Complex, Opp Syndicate Bank,Vasai| Off Vasai Vajreshwari Road, Waliv,",
    "24|Indian Lead Limited|lead|L.B.S. Marg||| Majiwada",
    "25|>Maharashtra Lead Pvt. Ltd.Dist. Pune, Maharashtra|lead|517/518||Aalandi Markal Road|Village Solu, Taluka Khed",
    "26|N. V. Metals & Alloys|lead|270/72||Annapurna Niwas|Jagannath Shankar Seth Road",
  ],
  hotCols: "ABCDEFG",
  hotRow: 17,
};

const RIGHT = {
  grid: "grid-cols-[116px_67px_210px_108px_225px_314px_305px_112px_145px_116px_116px]",
  cols: "ABCDEFGHIJK".split(""),
  count: 36,
  rows: [
    "",
    "",
    "|S. No.|Name of the unit|type|Address|Industrial estate|Locality|City|State",
    "|1|>Anantha Lead (Aishwarya|Lead waste|148-150|IDA-Medchal||Rangareddy|Andhra Pradesh",
    "|2|NILE Ltd|Lead waste|Panthangi Village||Choutuppal Mandal|Nalgonda|Andra Pradesh",
    "|3|S. K. Metal Industries|Lead waste|S.No. 206,|Plot No. 1.|Veraval|Rajkot|Gujarat",
    "|4|Om Enterprises|Lead waste|B-9,|Prem Colony,|Kundli|Sonepat|Haryana",
    "|5|>Ananda Metal Corporation|Lead waste| C-81,|Peenya Industrial Estate,|Peenya 3rd Stage|Bangalore|Karnataka",
    "|6|Eswari Metal Industries|Lead waste|Flat No. 101|Bikampadi Industrial Area,|Bikampadi|Mangalore|Karnataka",
    "|7|Hemalata Metal Mart|Lead waste| 65-B,|Penya Industrial Estate|Peenya 3rd Stage|Bangalore|Karnataka",
    "|8|>Sri Saraswati Metal Industries|Lead waste|Shed B-40|Veerasandra, Industrial Estate|Anekal|Bangalore|karnataka",
    "|9|Ganpati Metals|Lead waste| Survey No. 308,|Gram Manglia|A.B. Road|Indore|Madhya Pradesh",
    "|10|M.S. Metals|Lead waste|Plot No. 300|Sector-F, Industrial Estate,|Sanwar Road|Indore|Madhya Pradesh",
    "|11|Manoj Industries|Lead waste|Plot No. 15-16 D|Sector-C, Industrial Estate,|Sanwar Road|Indore|Madhya Pradesh",
    "|12|Power Pack Industries|Lead waste|32/D, Light Industrial Area|||Bhilai|Madhya Pradesh",
    "|13|Hans Enterprises|Lead waste|1, Meera,|>Golani Complex, Opp Syndicate Bank,| Off Vasai Vajreshwari Road, Waliv,|Thane|Maharashtra",
    "|14|Indian Lead Limited|Lead waste| L.B.S. Marg,|| Majiwada|Thane|Maharashtra",
    "|15|>Maharashtra Lead Pvt. Ltd.|Lead waste|Gat No. 517/518,|Aalandi Markal Road,|Village Solu, Taluka Khed|Pune|Maharashtra",
    "|16|N. V. Metals & Alloys|Lead waste||270/72, Annapurna Niwas,|Jagannath Shankar Seth Road|Mumbai|Maharashtra",
  ],
  hotCols: "E",
  hotRow: 23,
};

function Cell({ text }) {
  const cut = text.startsWith(">");
  const num = /^\d+$/.test(text);
  return (
    <div className={`relative flex h-[23px] min-w-0 border-r border-b border-[#c0c0c0] ${num ? "justify-end pr-px" : "pl-px"}`}>
      <span className={`pt-px leading-[22px] whitespace-pre ${cut ? "mr-1 w-full overflow-hidden" : ""}`}>{cut ? text.slice(1) : text}</span>
      {cut && <svg viewBox="0 0 5 10" className="absolute right-0 top-1.5 h-2.5 w-[5px]"><path d="M.5 .5L4.500 5 .5 9.500z" fill="#f00" stroke="#000" strokeWidth=".8" /></svg>}
    </div>
  );
}

function Sheet({ data, right }) {
  return (
    <div className="relative min-w-0 flex-1 overflow-hidden bg-white">
      <div className="flex h-5">
        <div className="w-[41px] shrink-0 border-r border-b border-[#8b8a88] bg-[#f5f5f3]" />
        <div className={`grid shrink-0 ${data.grid} ${UI} text-[15px] leading-5`}>
          {data.cols.map((c) => (
            <div key={c} className={data.hotCols.includes(c)
              ? "h-5 border-r border-b border-[#c9603a] bg-linear-to-b from-[#f6a88b] from-50% to-[#f07746] to-50% text-center font-bold text-white"
              : "h-5 border-r border-b border-[#8b8a88] bg-linear-to-b from-[#f7f7f5] from-50% to-[#f1f0ee] to-50% text-center text-[#4c4c4c]"}>{c}</div>
          ))}
        </div>
      </div>
      {Array.from({ length: data.count }, (_, r) => {
        const cells = (data.rows[r] || "").split("|");
        return (
          <div key={r} className="flex h-[23px]">
            <div className={r + 1 === data.hotRow
              ? `w-[41px] shrink-0 border-r border-b border-[#c9603a] bg-linear-to-r from-[#f6a88b] from-50% to-[#f07746] to-50% text-center text-[14px] leading-[24px] font-bold text-white ${UI}`
              : `w-[41px] shrink-0 border-r border-b border-[#8b8a88] bg-linear-to-r from-[#f7f7f5] from-50% to-[#f1f0ee] to-50% text-center text-[14px] leading-[24px] text-[#4c4c4c] ${UI}`}>{r + 1}</div>
            <div className={`grid shrink-0 ${data.grid} font-['Liberation_Sans',sans-serif] text-[19px] tracking-[0.12px] text-black`}>
              {data.cols.map((c, i) => <Cell key={c} text={cells[i] || ""} />)}
            </div>
          </div>
        );
      })}
      {right ? (
        <>
          <div className="absolute left-[1080px] top-[111px] h-px w-[306px] bg-[repeating-linear-gradient(90deg,#000_0_4px,#fff_4px_7px)]" />
          <div className="absolute left-[1080px] top-[456px] h-px w-[306px] bg-[repeating-linear-gradient(90deg,#000_0_4px,#fff_4px_7px)]" />
          <div className="absolute left-[1080px] top-[111px] h-[346px] w-px bg-[repeating-linear-gradient(180deg,#000_0_4px,#fff_4px_7px)]" />
          <div className="absolute left-[1385px] top-[111px] h-[346px] w-px bg-[repeating-linear-gradient(180deg,#000_0_4px,#fff_4px_7px)]" />
          <div className="absolute left-[540px] top-[525px] h-[25px] w-[228px] border-2 border-black">
            <div className="absolute -right-[3px] -bottom-[3px] size-[5px] bg-black" />
          </div>
        </>
      ) : (
        <div className="absolute left-[41px] top-[387px] h-6 w-full border-y border-[#f07746] bg-[#f07746]/25" />
      )}
    </div>
  );
}

/* ---------- scrollbars ---------- */
function VScroll({ right }) {
  return (
    <div className="flex w-[13px] shrink-0 flex-col">
      <div className="flex h-1.5 shrink-0 items-center justify-center bg-[#b3b2b0]"><div className="h-px w-2 bg-black" /></div>
      <div className="flex min-h-0 flex-1 flex-col rounded-[6px] border border-[#b0afad] bg-linear-to-r from-[#cfcdca] to-[#e2e0de]">
        <div className="flex h-[11px] shrink-0 items-center justify-center rounded-t-[6px] bg-[#f4f3f2]"><svg viewBox="0 0 6 4" className="h-1 w-1.5"><path d="M0 4h6L3 0z" fill="#aaa" /></svg></div>
        <div className={`-mx-px flex shrink-0 flex-col items-center justify-center gap-0.5 rounded-[6px] border border-[#a3a2a0] bg-linear-to-r from-white to-[#e6e5e3] ${right ? "h-[395px]" : "h-[305px]"}`}>
          {[0, 1, 2].map((i) => <div key={i} className="h-px w-[5px] bg-[#999]" />)}
        </div>
        <div className="flex-1" />
        <div className="flex h-[14px] shrink-0 items-center justify-center rounded-b-[6px] border-t border-[#b0afad] bg-[#f4f3f2]"><svg viewBox="0 0 6 4" className="h-1 w-1.5"><path d="M0 0h6L3 4z" fill="#666" /></svg></div>
      </div>
    </div>
  );
}

function HScroll({ right }) {
  return (
    <div className="flex h-[13px] shrink-0 pr-[13px]">
      <div className="flex min-w-0 flex-1 rounded-[6px] border border-[#a9a8a6] bg-linear-to-b from-[#cfcdca] to-[#e2e0de]">
        <div className="flex w-[10px] shrink-0 items-center justify-center rounded-l-[6px] bg-[#f4f3f2]"><svg viewBox="0 0 4 6" className="h-1.5 w-1"><path d="M4 0v6L0 3z" fill="#aaa" /></svg></div>
        <div className={`-my-px flex shrink-0 items-center justify-center gap-0.5 rounded-[6px] border border-[#a3a2a0] bg-linear-to-b from-white to-[#e6e5e3] ${right ? "w-[802px]" : "w-[541px]"}`}>
          {[0, 1, 2].map((i) => <div key={i} className="h-[5px] w-px bg-[#999]" />)}
        </div>
        <div className="flex-1" />
        <div className="flex w-[14px] shrink-0 items-center justify-center rounded-r-[6px] border-l border-[#b0afad] bg-[#f4f3f2]"><svg viewBox="0 0 4 6" className="h-1.5 w-1"><path d="M0 0v6l4-3z" fill="#666" /></svg></div>
      </div>
      <div className="flex w-[5px] shrink-0 items-center justify-center bg-[#b3b2b0]"><div className="h-2 w-px bg-black" /></div>
    </div>
  );
}

/* ---------- bars ---------- */
function NavTabs({ name, wide }) {
  return (
    <div className="flex h-5 shrink-0 items-start">
      <svg viewBox="0 0 118 20" className="h-5 w-[118px] shrink-0">
        <g fill="#adacaa">
          <path d="M13 4h1.500v12H13zM21 4v12l-6-6zM39 4v12l-6-6zM52 4v12l6-6zM71 4v12l6-6zM77.500 4H79v12h-1.500z" />
        </g>
        <path d="M99 4.500h5V8h3.500v4.500H104V16h-5v-3.500h-3.500V8H99z" fill="#4c4c4c" />
      </svg>
      <div className={`flex h-5 items-center justify-center border border-t-0 border-[#8b8a88] bg-white text-[13.5px] font-bold whitespace-nowrap text-[#333] ${wide ? "w-[198px] tracking-[-0.72px]" : "w-[76px] tracking-[-0.95px]"}`}>{name}</div>
    </div>
  );
}

const Check = () => <div className="size-3.5 shrink-0 rounded-[3px] border border-[#8b8a88] bg-white" />;

function FindBar() {
  return (
    <div className="flex h-[41px] shrink-0 items-center border-t border-white pb-[3px] text-[15px] text-[#4c4c4c]">
      <Grip />
      <svg viewBox="0 0 16 16" className="ml-2 size-4 shrink-0"><circle cx="8" cy="8" r="8" fill="#da4453" /><path d="M4.500 4.500l7 7M11.500 4.500l-7 7" stroke="#fff" strokeWidth="1.300" /></svg>
      <div className="ml-2.5 flex h-[25px] w-[248px] shrink-0 items-center rounded-[4px] border border-[#a19f9c] bg-white">
        <div className="flex-1 pl-[5px] text-[#8b8a88]">Find</div>
        <Drop w="w-[21px]" />
      </div>
      <svg viewBox="0 0 60 10" className="ml-[9px] h-2.5 w-[60px] shrink-0" fill="none"><path d="M1 9l7-7 7 7" stroke="#dcdbd8" /><path d="M34 2l7 7 7-7" stroke="#a9a8a5" /></svg>
      <div className="w-[53px] shrink-0 text-[14px] tracking-[-0.9px] whitespace-nowrap text-[#dddbd6]">Find All</div>
      <Check />
      <div className="ml-[9px] w-[225px] shrink-0 tracking-[-0.34px] whitespace-nowrap">Search Formatted Display String</div>
      <Check />
      <div className="ml-[9px] w-[79px] shrink-0 tracking-[-0.3px] whitespace-nowrap">Match Case</div>
      <Sep />
      <div className="flex w-[33px] justify-center"><Icon name="find" /></div>
      <Sep />
    </div>
  );
}

function StatusBar({ right }) {
  const seg = "flex h-full shrink-0 items-center";
  const bar = <div className="ml-auto h-4 w-px bg-[#c4c3c0]" />;
  return (
    <div className="flex h-[21px] shrink-0 items-center border-t border-[#b3b2b0] text-[13px] tracking-[-0.65px] whitespace-nowrap text-[#4c4c4c]">
      <div className={`${seg} pl-2.5 tracking-[-0.35px] ${right ? "w-[365px]" : "w-[282px]"}`}>Sheet 1 of 1{bar}</div>
      <div className={`${seg} pl-2 ${right ? "w-[456px]" : "w-[386px]"}`}>{right ? "" : "1 rows, 1024 columns selected"}{bar}</div>
      <div className={`${seg} pl-2 tracking-[-0.45px] ${right ? "w-[347px]" : "w-[262px]"}`}>Default{bar}</div>
      <div className={`${seg} w-[68px]`}>{bar}</div>
      <div className={`${seg} w-[29px] pl-[7px]`}><svg viewBox="0 0 16 16" className="size-4" fill="none" stroke="#4d4d4d" strokeWidth="1.200"><path d="M0 1.500h6M3 1.500v13M0 14.500h6M9 11v3h5v-3" /></svg>{bar}</div>
      <div className={`${seg} w-[29px] pl-1.5`}><Icon name="save" off size="size-4" />{bar}</div>
      <div className={`${seg} w-[29px]`}>{bar}</div>
      <div className={`${seg} ${right ? "w-[341px]" : "w-[258px]"}`}><span className="flex-1 text-center">{right ? "Sum=0" : "Sum=16"}</span>{bar}</div>
      <div className={`${seg} w-[143px] pl-2.5`}>
        <svg viewBox="0 0 125 12" className="h-3 w-[125px]"><path d="M0 6h7M118 6h7M121.500 2.500v7" stroke="#4c4c4c" strokeWidth="1.200" /><path d="M15 6h97" stroke="#b3b2b0" strokeWidth="2" /><path d="M63 1v10" stroke="#b3b2b0" strokeWidth="1.500" /><circle cx="69" cy="6" r="3.500" fill="#f2f1ef" stroke="#555" strokeWidth="1.300" /></svg>{bar}
      </div>
      <div className={`${seg} flex-1 justify-center tracking-[-0.3px]`}>140%</div>
    </div>
  );
}

function SideBar({ right }) {
  return (
    <div className="flex w-[47px] shrink-0 border-t border-b border-[#b3b2b0]">
      <div className="flex w-2 shrink-0 flex-col border-x border-[#b0afad] bg-[#f8f8f7]">
        <div className={right ? "h-[418px]" : "h-[328px]"} />
        <div className="-mx-px flex h-[73px] items-center bg-[#8f8e8c]"><svg viewBox="0 0 6 8" className="ml-px h-2 w-1.5"><path d="M0 0l6 4-6 4z" fill="#eee" /></svg></div>
      </div>
      <div className="flex flex-1 flex-col items-center pt-2.5">
        <Icon name="sliders" />
        <div className="mt-2 mb-[3px] h-px w-6 bg-[#d4d3d0]" />
        <div className="flex h-8 w-8 items-center justify-center rounded-[4px] border border-[#b3b2b0]"><Icon name="props" /></div>
        <div className="mt-[9px] flex flex-col gap-[15px]"><Icon name="styles" /><Icon name="gallery" /><Icon name="compass" /><Icon name="fx" /></div>
      </div>
    </div>
  );
}

function CalcWindow({ right }) {
  return (
    <div className={`relative flex min-w-0 flex-1 flex-col bg-[#f2f1ef] ${UI} text-[#4c4c4c]`}>
      {!right && <div className="absolute inset-x-0 top-0 h-1.5 bg-linear-to-b from-black/40 to-transparent" />}
      <div className="flex h-[41px] shrink-0 items-center border-b border-[#d6d5d2]">
        <Grip /><div className="w-px" />
        <Items list={right
          ? "calc v open v save v | pdf print preview | cut copy paste v brush | undo v redo- v- | find spell | rowins colins rowdel coldel | sort az za filter | image chart pivot | omega link comment headfoot | freeze split splitwin | paint"
          : "calc v open v save v | pdf print preview | cut copy paste v brush | undo- v- redo- v- | find spell | rowins colins- rowdel coldel | sort az za filter | image chart pivot | omega link comment headfoot | freeze split splitwin | paint"} />
      </div>
      <div className="flex h-[41px] shrink-0 items-center border-t border-b border-t-white border-b-[#d6d5d2]">
        <Grip />
        <div className="ml-px flex h-[25px] w-[156px] shrink-0 items-center rounded-[4px] border border-[#a19f9c] bg-white text-[15px]">
          <div className="flex-1 pl-[5px] tracking-[-0.05px] whitespace-nowrap">Liberation Sans</div><Drop w="w-[21px]" />
        </div>
        <div className="ml-2.5 flex h-[25px] w-[66px] shrink-0 items-center rounded-[4px] border border-[#a19f9c] bg-white text-[15px]">
          <div className="flex-1 pl-[5px] tracking-[-0.5px]">10</div><Drop w="w-[21px]" />
        </div>
        <Items list={`| bold italic under | fontcol v bgcol v | left center right | wrap ${right ? "merge-" : "merge"} | top middle bottom | dollar percent number date | decadd decdel | indent outdent | border v linestyle v bordercol v | cond cond2 cond3 cond4`} />
      </div>
      <div className="flex min-h-0 flex-1">
        <div className="flex min-w-0 flex-1 flex-col">
          <div className="flex h-9 shrink-0 items-center border-b border-[#a9a8a6]">
            <div className={`ml-px flex h-[25px] w-[154px] shrink-0 items-center rounded-[4px] border text-[14px] ${right ? "border-[#a19f9c] bg-white" : "border-[#cfcecb] bg-[#eae9e7]"}`}>
              <div className="flex-1 pl-[5px] tracking-[-0.4px]">{right ? "E23" : ""}</div><Drop w="w-[21px]" off={!right} />
            </div>
            <div className="w-px" /><Sep />
            <Items list={right ? "fx sigma equal |" : "fx- sigma- equal- |"} />
            <div className={`ml-0.5 h-[23px] flex-1 rounded-[3px] bg-white ${right ? "border border-[#a19f9c]" : "border-2 border-[#dbdad7]"}`} />
            <div className="mx-[5px] flex h-[23px] w-[11px] items-center justify-center rounded-[5px] border border-[#c4c3c0] bg-[#f7f7f6]"><svg viewBox="0 0 6 4" className="h-1 w-1.5"><path d="M0 0h6L3 4z" fill={right ? "#444" : "#aaa"} /></svg></div>
          </div>
          <div className="flex min-h-0 flex-1">
            <Sheet data={right ? RIGHT : LEFT} right={right} />
            <VScroll right={right} />
          </div>
          <HScroll right={right} />
          <NavTabs name={right ? "List of Lead recyclers_updated" : "recyclers"} wide={right} />
        </div>
        <SideBar right={right} />
      </div>
      <FindBar />
      <StatusBar right={right} />
    </div>
  );
}

export default function App() {
  return (
    <div className="flex h-[1080px] w-[3520px] items-start overflow-hidden bg-black">
      <div className="flex h-[900px] w-[1600px] shrink-0 flex-col">
        <Panel title="" />
        <div className="flex min-h-0 flex-1"><Launcher folded /><CalcWindow /></div>
      </div>
      <div className="flex h-[1080px] w-[1920px] shrink-0 flex-col">
        <Panel title="List of Lead recyclers_updated.csv - LibreOffice Calc" />
        <div className="flex min-h-0 flex-1"><Launcher /><CalcWindow right /></div>
      </div>
    </div>
  );
}
